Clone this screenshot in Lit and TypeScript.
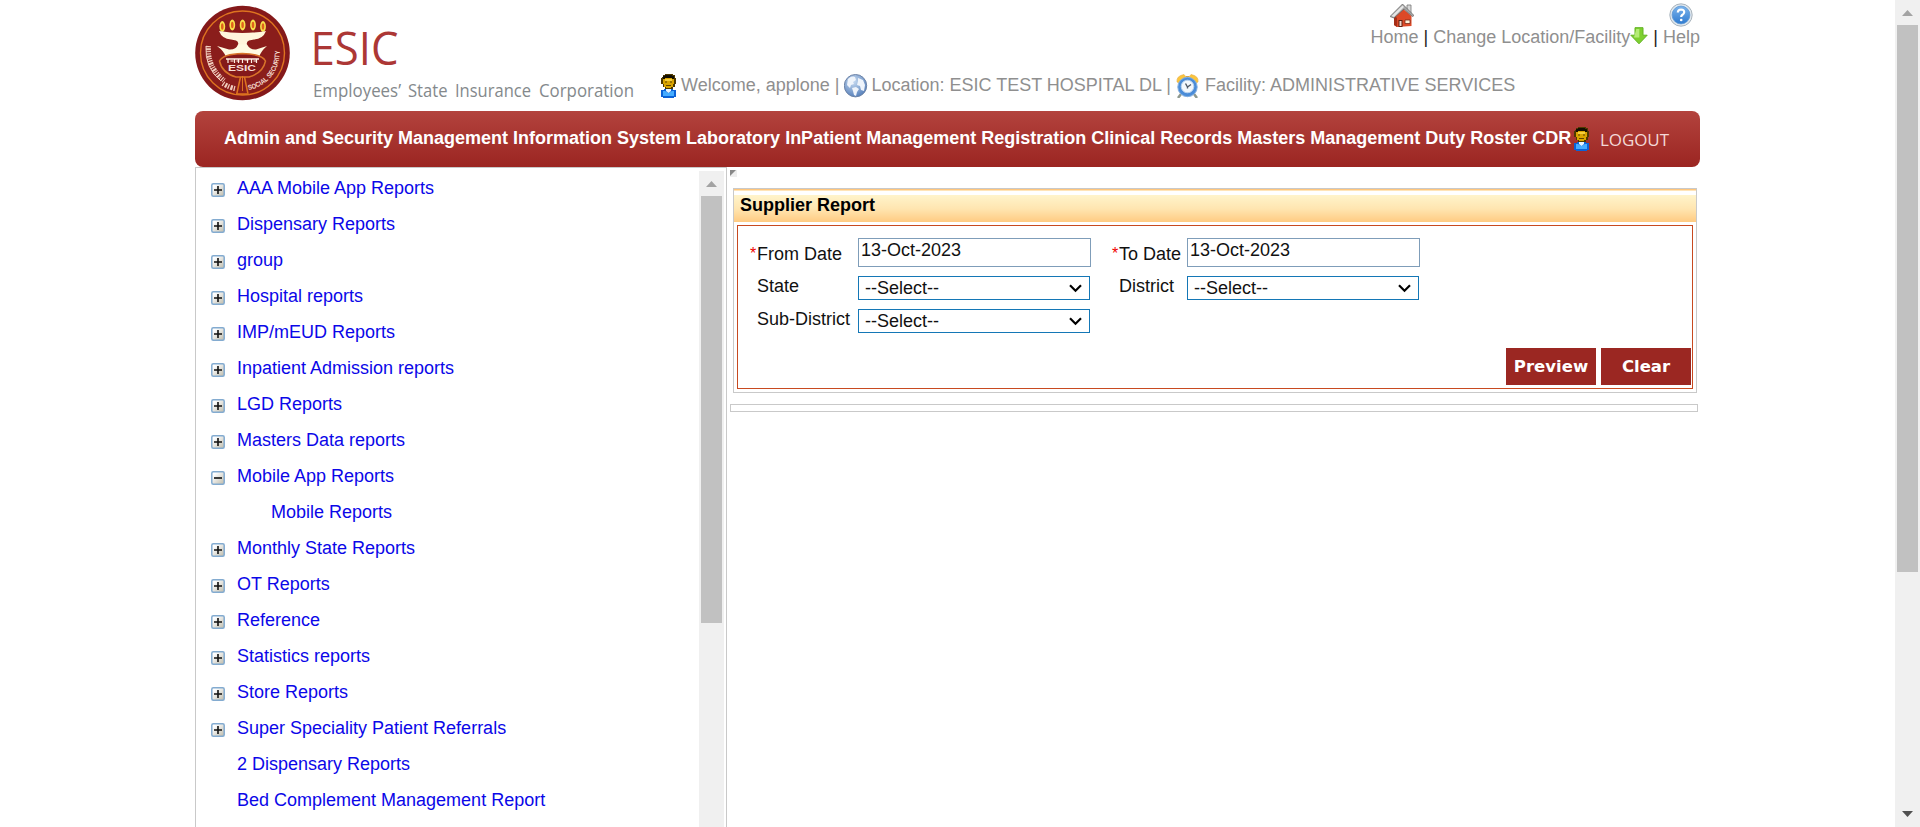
import { LitElement, html, svg, css } from "lit";
import { customElement, property, state } from "lit/decorators.js";
import { classMap } from "lit/directives/class-map.js";

interface TreeItem {
  label: string;
  mark: "plus" | "minus" | "none";
  child?: boolean;
}

const TREE: TreeItem[] = [
  { label: "AAA Mobile App Reports", mark: "plus" },
  { label: "Dispensary Reports", mark: "plus" },
  { label: "group", mark: "plus" },
  { label: "Hospital reports", mark: "plus" },
  { label: "IMP/mEUD Reports", mark: "plus" },
  { label: "Inpatient Admission reports", mark: "plus" },
  { label: "LGD Reports", mark: "plus" },
  { label: "Masters Data reports", mark: "plus" },
  { label: "Mobile App Reports", mark: "minus" },
  { label: "Mobile Reports", mark: "none", child: true },
  { label: "Monthly State Reports", mark: "plus" },
  { label: "OT Reports", mark: "plus" },
  { label: "Reference", mark: "plus" },
  { label: "Statistics reports", mark: "plus" },
  { label: "Store Reports", mark: "plus" },
  { label: "Super Speciality Patient Referrals", mark: "plus" },
  { label: "2 Dispensary Reports", mark: "none" },
  { label: "Bed Complement Management Report", mark: "none" },
];

const MODULES = [
  "Admin and Security",
  "Management Information System",
  "Laboratory",
  "InPatient Management",
  "Registration",
  "Clinical Records",
  "Masters Management",
  "Duty Roster",
  "CDR",
];

const emblem = html`<svg class="emblem" viewBox="0 0 95 96" width="95" height="96">
  <circle cx="47.5" cy="48" r="47.3" fill="#84191a" />
  <circle cx="47.5" cy="48" r="42" fill="#8a1d1b" stroke="#de7420" stroke-width="1.4" />
  ${[27.3, 37.3, 47.6, 58, 68].map(
    (x, i) => svg`
      <ellipse cx=${x} cy=${i === 0 || i === 4 ? 21.5 : 20} rx="2.9" ry="5.4" fill="#f8e24a" />
      <ellipse cx=${x} cy=${i === 0 || i === 4 ? 21.5 : 20} rx="1.3" ry="3.3" fill="#e0631c" />`,
  )}
  <path d="M24 26 Q47 30 71 26 Q68 34 59 34.5 L54 35.5 Q51 37 52 40 L43 40 Q44 37 41 35.5 L36 34.5 Q27 34 24 26Z" fill="#fff6dc" />
  <path d="M43 39.5 H52 Q55 45 61 44.5 L72 41 Q66 46 64 52 L60 57 H35 L31 52 Q29 46 22 41 L34 44.5 Q41 45 43 39.5Z" fill="#fffbe2" />
  <path d="M24.5 56 Q28 49 47.3 48.5 Q67 49 70.5 56 Q68 68 54 72 H41 Q27 68 24.5 56Z" fill="#84191a" stroke="#d9742a" stroke-width="1.5" />
  <path d="M31 54 H64" stroke="#fff1e6" stroke-width="1.3" />
  <path d="M33 54v4m2.500-2h3m1-2v4m4-4v4m-2-2h3m3-2v4m2-3h4m-1-1v4m4-4v4m2-2h3m0-2v4" stroke="#fff1e6" stroke-width="1.2" fill="none" />
  <text x="33" y="66" class="tiny bold" textLength="28" lengthAdjust="spacingAndGlyphs" font-size="8.200" fill="#f7ded6">ESIC</text>
  <path d="M45.500 72 L41.500 90 M49.500 72 L53 89 M42 89 H52" stroke="#de7420" stroke-width="1.500" fill="none" />
  <path d="M47.500 71 V86" stroke="#de7420" stroke-width="1" />
  <path d="M13.500 41 Q12 62 29 75.500" stroke="#f0cdbd" stroke-width="5" stroke-dasharray="1.200 1 2 .8 1 1.300" fill="none" />
  <path d="M11 41 Q9.500 63 26 76" stroke="#f0cdbd" stroke-width="1" fill="none" />
  <path d="M28 78.500 Q33 82 40 83.500" stroke="#f0cdbd" stroke-width="5" stroke-dasharray="1.300 1.400 2.200 1" fill="none" />
  <path id="ring" d="M53.500 85 A37.500 37.500 0 0 0 84 41" fill="none" />
  <text class="tiny bold" font-size="7" fill="#f5dccf"><textPath href="#ring" textLength="55" lengthAdjust="spacingAndGlyphs">SOCIAL SECURITY</textPath></text>
</svg>`;

const person = html`<svg viewBox="0 0 15 24" width="15" height="24">
  <path d="M1 3h1V1h2V0h8v1h2v3h1v6h-1v3h-2v2H4v-2H2v-3H0V4h1z" fill="#4f3900" />
  <path d="M2 4h11v6h-1v3h-2v1H5v-1H3v-3H2z" fill="#d9a400" />
  <path d="M4 5h7v2H4z" fill="#f6cf3d" />
  <path d="M2 2h2V1h7v1h2v3h-2V4H4v1H2z" fill="#130e02" />
  <path d="M4 8h2m3 0h2M5 11.500h5" stroke="#5f4300" />
  <path d="M0 16h3v-1h9v1h3v7h-2v1H2v-1H0z" fill="#0b62d6" />
  <path d="M2 17h2l3.500 2L11 17h2v5H2z" fill="#45acff" />
  <path d="M5 15h5v2L7.500 19 5 17z" fill="#e7f4ff" />
</svg>`;

const globe = html`<svg viewBox="0 0 24 24" width="24" height="24">
  <defs><radialGradient id="gl" cx=".4" cy=".3" r=".8"><stop offset="0" stop-color="#c9dcf2" /><stop offset="1" stop-color="#4a76b5" /></radialGradient></defs>
  <circle cx="11.500" cy="11.700" r="11.200" fill="url(#gl)" stroke="#6d83a6" />
  <path d="M4 5 Q8 1.500 11 3 L12 6 9 8 10 10 7 11 6 14 3 11z M8 14l4-1 3 2-2 3-1 4-2-1-1-4z M14 4l5 2 2 5-1 6-3-1-1-4-3-1 1-4z" fill="#eff4fb" />
</svg>`;

const clock = html`<svg viewBox="0 0 24 24" width="24" height="24">
  <path d="M5 20l-3 4M18 20l3 4" stroke="#8f998f" stroke-width="2.500" />
  <path d="M1 8 Q0 2 8 .5 L10 3 3 9zM22 8 Q23 2 15 .5 L13 3 20 9z" fill="#fbc53d" stroke="#e5ad45" stroke-width=".6" />
  <path d="M10 2h3v2h-3z" fill="#d3a548" />
  <circle cx="11.500" cy="13" r="9.700" fill="#4a8cd8" stroke="#82aee0" />
  <circle cx="11.500" cy="12.500" r="6.300" fill="#f3f8fd" stroke="#b9d2ee" />
  <path d="M9.500 9.500l2 3.500 3.500-2.500M11.500 13v1.500" stroke="#505a68" stroke-width="1.400" fill="none" />
</svg>`;

const house = html`<svg viewBox="0 0 24 24" width="24" height="24">
  <path d="M17 2h4v9h-4z" fill="#d8d8d8" stroke="#777" stroke-width=".8" />
  <path d="M4 12.500L12 5l9.500 8V23L7 24l-3-2z" fill="#dc4a28" />
  <path d="M4 12l3 3v9l-3-2z" fill="#a52f18" />
  <path d="M0 13.500L12.500 1 24 12.500l-1.500 1L14 6 4 15z" fill="#a7a7a7" stroke="#606060" stroke-width=".7" />
  <path d="M1.500 13L12.500 2.500 14 4 4 14z" fill="#e7e7e7" />
  <path d="M8.500 17h4v7h-4z" fill="#5f2112" /><path d="M9.500 18h2v5h-2z" fill="#f0d4c9" />
  <path d="M15 17h5v3.500h-5z" fill="#fff3dc" stroke="#7a2b19" stroke-width=".8" />
</svg>`;

const help = html`<svg viewBox="0 0 24 24" width="24" height="24">
  <defs><linearGradient id="hp" x2="0" y2="1"><stop offset="0" stop-color="#7cb4ec" /><stop offset="1" stop-color="#2f7bd0" /></linearGradient></defs>
  <circle cx="12" cy="12" r="11.200" fill="#dfe7ee" stroke="#a9b4bd" />
  <circle cx="12" cy="12" r="8.900" fill="url(#hp)" stroke="#5b97d4" stroke-width=".8" />
  <path d="M8.800 9.500Q9 6.500 12.100 6.500 15.300 6.600 15.200 9.200 15.100 10.700 13.500 11.700 12.200 12.500 12.200 14" stroke="#fff" stroke-width="2.200" fill="none" />
  <circle cx="12.200" cy="17" r="1.300" fill="#fff" />
</svg>`;

const downArrow = html`<svg class="down" viewBox="0 0 18 18" width="18" height="18">
  <path d="M5 .7h8v7.500h4.200L9 16.800.8 8.200H5z" fill="#7ed030" stroke="#62b322" />
  <path d="M6.300 2h3v8.500H4z" fill="#b5ec76" />
</svg>`;

const toggle = (kind: string) => html`<svg viewBox="0 0 14 14" width="14" height="14">
  <defs><linearGradient id="tg" x2="1" y2="1"><stop offset=".2" stop-color="#fff" /><stop offset="1" stop-color="#bdb9a8" /></linearGradient></defs>
  <rect x=".8" y=".8" width="12.400" height="12.400" rx="1.500" fill="url(#tg)" stroke="#83abd0" stroke-width="1.500" />
  <path d=${kind === "plus" ? "M3 7h8M7 3v8" : "M3 7h8"} stroke="#111" stroke-width="1.600" />
</svg>`;

@customElement("scroll-rail")
class ScrollRail extends LitElement {
  @property({ type: Number }) thumb = 100;
  @property({ type: Boolean }) ending = false;

  static styles = css`
    :host { display: flex; flex-direction: column; align-items: center; width: 25px; background: #f0f0f0; flex: none; }
    svg { display: block; flex: none; }
    .thumb { width: 21px; background: #c1c1c1; flex: none; }
    .space { flex: 1; }
  `;

  render() {
    return html`
      <svg width="25" height="25" viewBox="0 0 25 25"><path d="M7 16l5.500-6 5.500 6z" fill="#a3a3a3" /></svg>
      <div class="thumb" style="height:${this.thumb}px"></div>
      <div class="space"></div>
      ${this.ending
        ? html`<svg width="25" height="25" viewBox="0 0 25 25"><path d="M7 9l5.500 6 5.500-6z" fill="#505050" /></svg>`
        : ""}
    `;
  }
}

@customElement("app-root")
class AppRoot extends LitElement {
  @state() private from = "13-Oct-2023";
  @state() private to = "13-Oct-2023";

  static styles = css`
    :host { display: flex; height: 827px; overflow: hidden; background: #fff; color: #111;
      font: 18px/20px "Liberation Sans", Arial, sans-serif; }
    * { box-sizing: border-box; }
    svg { display: block; flex: none; }
    .tiny { font-family: "Liberation Sans", Arial, sans-serif; }
    .bold { font-weight: 700; }
    .viewport { flex: 1; display: flex; justify-content: flex-start; padding-left: 195px; min-width: 0; }
    .page { width: 1505px; display: flex; flex-direction: column; }

    .header { height: 111px; display: flex; flex: none; }
    .emblem { margin-top: 5px; }
    .wordmark { margin-left: 24px; font-family: "Open Sans", "Noto Sans", sans-serif; }
    .meta { flex: 1; display: flex; flex-direction: column; min-width: 0; color: #8f8f8f; }
    .shortcut-icons { display: flex; justify-content: flex-end; gap: 255px; padding: 3px 7px 0 0; }
    .shortcuts { display: flex; justify-content: flex-end; height: 20px; white-space: pre; }
    .bar { color: #222; }
    .session { display: flex; align-items: flex-start; margin: 27px 0 0 22px; white-space: pre; }
    .session span { line-height: 22px; }
    .who { margin-left: 5px; }
    .where { margin-left: 3px; }
    .unit { margin-left: 5px; }

    .nav { height: 56px; flex: none; display: flex; align-items: center; padding: 0 0 1px 29px; color: #fff;
      border-radius: 8px; background: linear-gradient(#b3433d, #9b2521); font-weight: 700; white-space: nowrap; }
    .modules { display: flex; gap: 5px; margin-right: 3px; }
    .modules span { margin-top: -1px; }
    .logout { margin-left: 11px; }

    .body { flex: 1; display: flex; min-height: 0; }
    .side { width: 532px; display: flex; flex: none; border: solid #c9c9c9; border-width: 1px 1px 0 1px; padding: 3px 2px 0 0; }
    .tree { flex: 1; margin: -1px 0 0; padding: 0 0 0 15px; list-style: none; }
    .item { display: flex; height: 36px; line-height: 36px; color: #0b07e8; white-space: nowrap; }
    .mark { width: 26px; flex: none; padding-top: 13px; }
    .item.child { padding-left: 34px; }

    .content { flex: 1; padding: 3px 3px 0 3px; min-width: 0; }
    .corner { margin-bottom: 11px; }
    .panel { margin-left: 3px; width: 964px; height: 205px; border: 1px solid #c9c9c9; padding-bottom: 3px; display: flex; flex-direction: column; }
    .title { height: 33px; flex: none; padding: 7px 0 0 6px; font-weight: 700; color: #000; line-height: 18px;
      background: linear-gradient(#ffc67c 0 1px, #ffe4b8 1px 2px, #fff 2px 6px, #fff4cb 6px, #ffe5b0 20px, #ffcb82 33px); }
    .form { flex: 1; margin: 3px 3px 0; border: 1px solid #c84a20; display: flex; flex-direction: column; padding: 12px 1px 3px 12px; }
    .fields { display: grid; grid-template-columns: 108px 254px 75px 233px; grid-template-rows: 29px 24px 24px; row-gap: 9px; }
    .label { padding-left: 7px; white-space: nowrap; }
    .req { padding: 6px 0 0 0; display: flex; }
    .star { width: 7px; color: #f00000; font-size: 16px; }
    .low { padding-top: 1px; }
    .date { width: 233px; height: 29px; border: 1px solid #7f9db9; padding: 0 2px 5px; font: inherit; color: #111; outline: none; }
    .pick { position: relative; width: 232px; height: 24px; }
    .pick select { appearance: none; width: 100%; height: 24px; border: 1px solid #1477b6; border-radius: 0; background: #fff;
      padding: 0 6px; font: inherit; color: #111; }
    .pick svg { position: absolute; right: 8px; top: 8px; }
    .actions { display: flex; justify-content: flex-end; gap: 5px; margin-top: auto; }
    .btn { width: 90px; height: 37px; border: 0; padding: 0; background: #9b2722; color: #fff; font: bold 16.500px "DejaVu Sans", Verdana, sans-serif; }
    .result { height: 8px; width: 968px; margin-top: 11px; border: 1px solid #c9c9c9; }
  `;

  private pick() {
    return html`<div class="pick">
      <select><option>--Select--</option></select>
      <svg width="13" height="9" viewBox="0 0 13 9"><path d="M1 1.300l5.500 5.500L12 1.300" fill="none" stroke="#000" stroke-width="2.200" /></svg>
    </div>`;
  }

  private header() {
    return html`<header class="header">
      ${emblem}
      <svg class="wordmark" width="325" height="111" viewBox="0 0 325 111">
        <text x="-3.500" y="64.500" font-size="46" fill="#ac3735" textLength="88" lengthAdjust="spacingAndGlyphs">ESIC</text>
        <g font-size="18.500" fill="#84898c">
          <text x="-1" y="96.500" textLength="88" lengthAdjust="spacingAndGlyphs">Employees’</text>
          <text x="94" y="96.500" textLength="39.500" lengthAdjust="spacingAndGlyphs">State</text>
          <text x="141" y="96.500" textLength="76" lengthAdjust="spacingAndGlyphs">Insurance</text>
          <text x="225" y="96.500" textLength="95" lengthAdjust="spacingAndGlyphs">Corporation</text>
        </g>
      </svg>
      <div class="meta">
        <div class="shortcut-icons">${house}${help}</div>
        <div class="shortcuts"><span>Home</span><span class="bar"> | </span><span>Change Location/Facility</span>${downArrow}<span class="bar"> | </span><span>Help</span></div>
        <div class="session">${person}<span class="who">Welcome, applone | </span>${globe}<span class="where">Location: ESIC TEST HOSPITAL DL | </span>${clock}<span class="unit">Facility: ADMINISTRATIVE SERVICES</span></div>
      </div>
    </header>`;
  }

  render() {
    return html`
      <div class="viewport">
        <div class="page">
          ${this.header()}
          <nav class="nav">
            <div class="modules">${MODULES.map((m) => html`<span>${m}</span>`)}</div>
            ${person}
            <svg class="logout" width="72" height="24" viewBox="0 0 72 24">
              <text x="0" y="19" font-family="Open Sans, Noto Sans, sans-serif" font-weight="400" font-size="17" fill="#f3d9d7" textLength="69">LOGOUT</text>
            </svg>
          </nav>
          <div class="body">
            <aside class="side">
              <ul class="tree">
                ${TREE.map((t) => html`<li class=${classMap({ item: true, child: !!t.child })}>
                  <span class="mark">${t.mark === "none" ? "" : toggle(t.mark)}</span><span>${t.label}</span>
                </li>`)}
              </ul>
              <scroll-rail .thumb=${427}></scroll-rail>
            </aside>
            <main class="content">
              <svg class="corner" width="7" height="7" viewBox="0 0 7 7"><path d="M0 0h7v7H0z" fill="#eee" /><path d="M0 0h6L0 6z" fill="#888" /></svg>
              <section class="panel">
                <div class="title">Supplier Report</div>
                <div class="form">
                  <div class="fields">
                    <div class="req"><span class="star">*</span>From Date</div>
                    <input class="date" .value=${this.from} />
                    <div class="req"><span class="star">*</span>To Date</div>
                    <input class="date" .value=${this.to} />
                    <div class="label">State</div>
                    ${this.pick()}
                    <div class="label">District</div>
                    ${this.pick()}
                    <div class="label">Sub-District</div>
                    ${this.pick()}
                  </div>
                  <div class="actions"><button class="btn">Preview</button><button class="btn">Clear</button></div>
                </div>
              </section>
              <div class="result"></div>
            </main>
          </div>
        </div>
      </div>
      <scroll-rail .thumb=${547} .ending=${true}></scroll-rail>
    `;
  }
}
